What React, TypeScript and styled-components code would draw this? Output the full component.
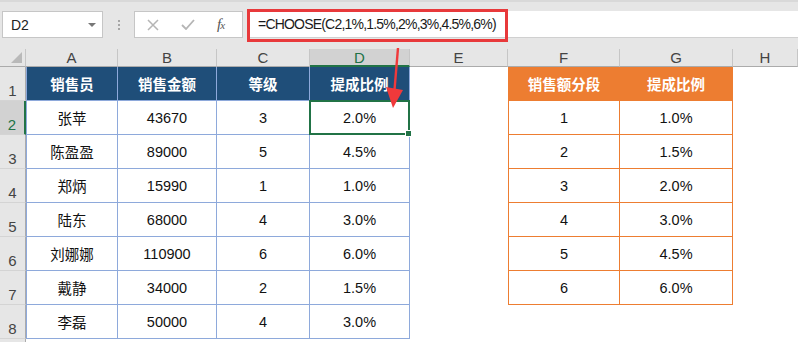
import { Fragment } from "react";
import styled, { createGlobalStyle } from "styled-components";

const GlobalStyle = createGlobalStyle`
  body {
    margin: 0;
    background: #ffffff;
    font-family: "Liberation Sans", "Noto Sans CJK SC", sans-serif;
    overflow: hidden;
  }
`;

const Page = styled.div`
  position: relative;
  width: 798px;
  height: 342px;
  overflow: hidden;
  background: #ffffff;
`;

/* 수식 입력줄 */
const TopBar = styled.div`
  height: 49px;
  box-sizing: border-box;
  background: #e6e6e6;
  border-top: 2px solid #d9d9d9;
  padding-top: 9px;
  display: flex;
  align-items: flex-start;
`;

const NameBox = styled.div`
  margin-left: 2px;
  width: 101px;
  height: 27px;
  box-sizing: border-box;
  background: #fff;
  border: 1px solid #c6c6c6;
  display: flex;
  align-items: center;
  justify-content: space-between;
  padding: 0 6px 0 8px;
  font-size: 14px;
  color: #222;
`;

const DropArrow = styled.span`
  width: 0;
  height: 0;
  border-left: 4px solid transparent;
  border-right: 4px solid transparent;
  border-top: 4px solid #777;
`;

const Dots = styled.div`
  width: 31px;
  height: 27px;
  display: flex;
  flex-direction: column;
  align-items: center;
  justify-content: center;
  gap: 2px;
  span {
    width: 2px;
    height: 2px;
    background: #a6a6a6;
  }
`;

const ActionBox = styled.div`
  width: 109px;
  height: 27px;
  box-sizing: border-box;
  background: #fff;
  border: 1px solid #c6c6c6;
  display: flex;
  align-items: center;
  padding-left: 12px;
  gap: 22px;
`;

const Fx = styled.span`
  font-family: "Liberation Serif", serif;
  font-style: italic;
  font-size: 15px;
  color: #555;
  letter-spacing: -1px;
  small {
    font-size: 11px;
  }
`;

const FormulaField = styled.div`
  position: relative;
  margin-left: 4px;
  flex: 1;
  height: 27px;
  box-sizing: border-box;
  background: #fff;
  border-bottom: 1px solid #d0d0d0;
  display: flex;
  align-items: center;
  padding-left: 11px;
  font-size: 14px;
  letter-spacing: -0.8px;
  color: #1a1a1a;
`;

const RedFrame = styled.div`
  position: absolute;
  left: 0;
  top: -2px;
  width: 261px;
  height: 33px;
  box-sizing: border-box;
  border: 3px solid #e8393b;
  pointer-events: none;
`;

/* 시트 그리드 */
const Sheet = styled.div`
  display: grid;
  grid-template-columns: 26px 92px 99px 93px 100px 98px 112px 113px 65px;
  grid-template-rows: 18px;
  grid-auto-rows: 34px;
`;

const Corner = styled.div`
  position: relative;
  background: #e6e6e6;
  border-right: 1px solid #c6c6c6;
  border-bottom: 1px solid #ababab;
  box-sizing: border-box;
  &::after {
    content: "";
    position: absolute;
    right: 3px;
    bottom: 3px;
    width: 0;
    height: 0;
    border-left: 11px solid transparent;
    border-bottom: 11px solid #b9b9b9;
  }
`;

const ColHead = styled.div<{ $active?: boolean }>`
  box-sizing: border-box;
  background: ${(p) => (p.$active ? "#d2d2d2" : "#e6e6e6")};
  color: ${(p) => (p.$active ? "#217346" : "#444")};
  border-right: 1px solid #c6c6c6;
  border-bottom: ${(p) => (p.$active ? "2px solid #217346" : "1px solid #ababab")};
  display: flex;
  align-items: center;
  justify-content: center;
  font-size: 15px;
`;

const RowHead = styled.div<{ $active?: boolean }>`
  box-sizing: border-box;
  background: ${(p) => (p.$active ? "#d2d2d2" : "#e6e6e6")};
  color: ${(p) => (p.$active ? "#217346" : "#444")};
  border-right: ${(p) => (p.$active ? "2px solid #217346" : "1px solid #ababab")};
  border-bottom: 1px solid #d4d4d4;
  display: flex;
  align-items: flex-end;
  justify-content: center;
  padding-bottom: 1px;
  font-size: 15px;
`;

type Kind = "blueHead" | "blueBody" | "orangeHead" | "orangeBody" | "blank";

const kindStyle: Record<Kind, { bg: string; line: string; color: string; weight: number }> = {
  blueHead: { bg: "#1f4e79", line: "#8ea9db", color: "#ffffff", weight: 700 },
  blueBody: { bg: "#ffffff", line: "#8ea9db", color: "#111111", weight: 400 },
  orangeHead: { bg: "#ed7d31", line: "#ed7d31", color: "#ffffff", weight: 700 },
  orangeBody: { bg: "#ffffff", line: "#ed7d31", color: "#111111", weight: 400 },
  blank: { bg: "#ffffff", line: "transparent", color: "#111111", weight: 400 },
};

const Cell = styled.div<{ $kind: Kind; $edge?: boolean; $selected?: boolean }>`
  position: relative;
  box-sizing: border-box;
  background: ${(p) => kindStyle[p.$kind].bg};
  color: ${(p) => kindStyle[p.$kind].color};
  font-weight: ${(p) => kindStyle[p.$kind].weight};
  border-right: 1px solid ${(p) => kindStyle[p.$kind].line};
  border-bottom: 1px solid ${(p) => kindStyle[p.$kind].line};
  border-left: ${(p) => (p.$edge ? `1px solid ${kindStyle[p.$kind].line}` : "none")};
  display: flex;
  align-items: center;
  justify-content: center;
  font-size: 14.5px;
  ${(p) =>
    p.$selected &&
    `
    z-index: 2;
    &::after {
      content: "";
      position: absolute;
      left: -1px;
      top: -1px;
      right: -1px;
      bottom: -1px;
      border: 2px solid #217346;
    }
    &::before {
      content: "";
      position: absolute;
      right: -3px;
      bottom: -3px;
      width: 5px;
      height: 5px;
      background: #217346;
      border: 1px solid #fff;
      z-index: 3;
    }
  `}
`;

const Arrow = styled.svg`
  position: absolute;
  left: 380px;
  top: 46px;
  z-index: 5;
  pointer-events: none;
`;

const letters = ["A", "B", "C", "D", "E", "F", "G", "H"];

const sales: [string, string, string, string][] = [
  ["张苹", "43670", "3", "2.0%"],
  ["陈盈盈", "89000", "5", "4.5%"],
  ["郑炳", "15990", "1", "1.0%"],
  ["陆东", "68000", "4", "3.0%"],
  ["刘娜娜", "110900", "6", "6.0%"],
  ["戴静", "34000", "2", "1.5%"],
  ["李磊", "50000", "4", "3.0%"],
];

const rates: [string, string][] = [
  ["1", "1.0%"],
  ["2", "1.5%"],
  ["3", "2.0%"],
  ["4", "3.0%"],
  ["5", "4.5%"],
  ["6", "6.0%"],
];

export default function App() {
  return (
    <>
      <GlobalStyle />
      <Page>
        <TopBar>
          <NameBox>
            D2
            <DropArrow />
          </NameBox>
          <Dots>
            <span />
            <span />
            <span />
          </Dots>
          <ActionBox>
            <svg width="12" height="12" viewBox="0 0 12 12">
              <path d="M1 1L11 11M11 1L1 11" stroke="#b5b5b5" strokeWidth="1.5" fill="none" />
            </svg>
            <svg width="14" height="11" viewBox="0 0 14 11">
              <path d="M1 6L5 10L13 1" stroke="#b5b5b5" strokeWidth="1.8" fill="none" />
            </svg>
            <Fx>
              f<small>x</small>
            </Fx>
          </ActionBox>
          <FormulaField>
            =CHOOSE(C2,1%,1.5%,2%,3%,4.5%,6%)
            <RedFrame />
          </FormulaField>
        </TopBar>

        <Sheet>
          <Corner />
          {letters.map((l) => (
            <ColHead key={l} $active={l === "D"}>
              {l}
            </ColHead>
          ))}

          {/* 1행: 머리글 */}
          <RowHead>1</RowHead>
          <Cell $kind="blueHead" $edge>销售员</Cell>
          <Cell $kind="blueHead">销售金额</Cell>
          <Cell $kind="blueHead">等级</Cell>
          <Cell $kind="blueHead">提成比例</Cell>
          <Cell $kind="blank" />
          <Cell $kind="orangeHead" $edge>销售额分段</Cell>
          <Cell $kind="orangeHead">提成比例</Cell>
          <Cell $kind="blank" />

          {sales.map((row, i) => (
            <Fragment key={row[0]}>
              <RowHead $active={i === 0}>{i + 2}</RowHead>
              <Cell $kind="blueBody" $edge>{row[0]}</Cell>
              <Cell $kind="blueBody">{row[1]}</Cell>
              <Cell $kind="blueBody">{row[2]}</Cell>
              <Cell $kind="blueBody" $selected={i === 0}>
                {row[3]}
              </Cell>
              <Cell $kind="blank" />
              {rates[i] ? (
                <>
                  <Cell $kind="orangeBody" $edge>{rates[i][0]}</Cell>
                  <Cell $kind="orangeBody">{rates[i][1]}</Cell>
                </>
              ) : (
                <>
                  <Cell $kind="blank" />
                  <Cell $kind="blank" />
                </>
              )}
              <Cell $kind="blank" />
            </Fragment>
          ))}
          <RowHead />
        </Sheet>

        <Arrow width="30" height="66" viewBox="0 0 30 66">
          <path d="M18 2L14.5 44" stroke="#f0393b" strokeWidth="2.4" fill="none" />
          <path d="M6 41L23 44L13 62Z" fill="#f0393b" />
        </Arrow>
      </Page>
    </>
  );
}
